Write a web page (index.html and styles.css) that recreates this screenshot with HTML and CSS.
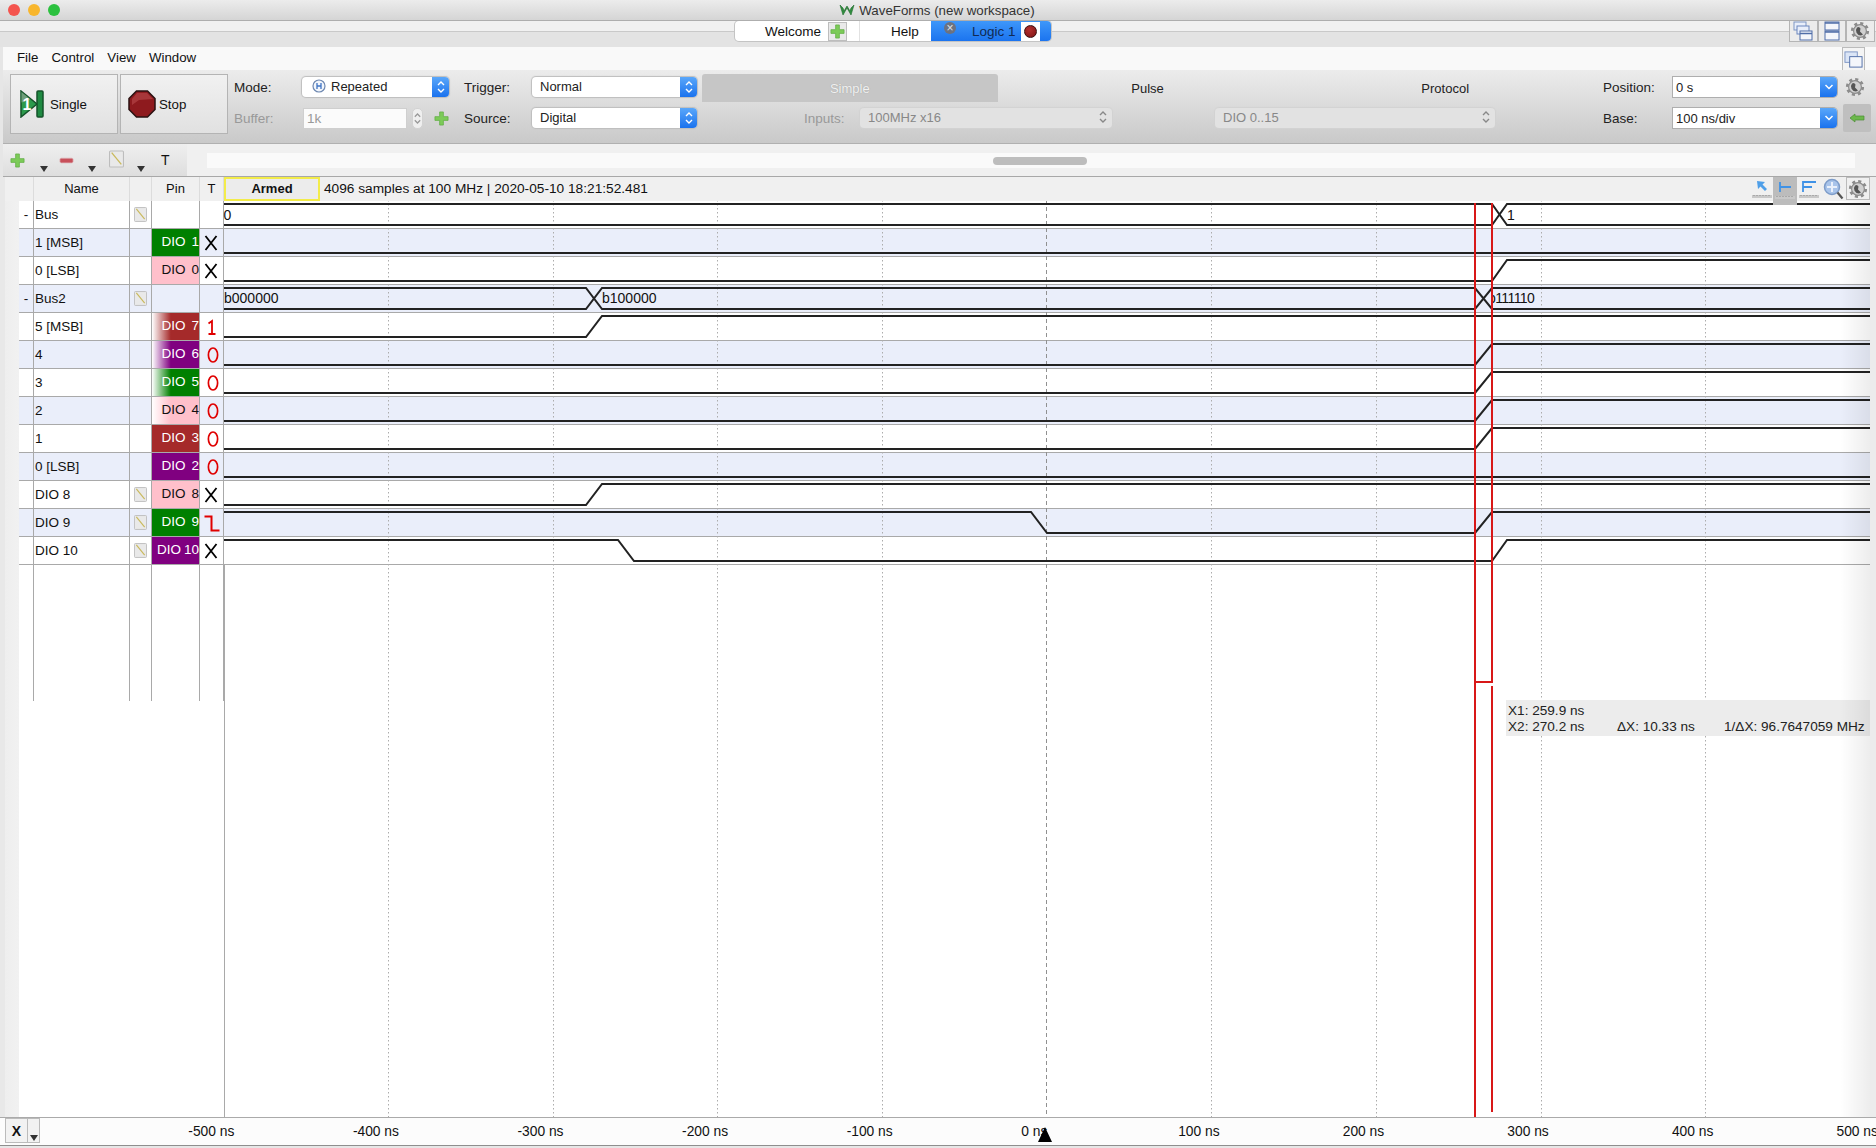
FILE: index.html
```html
<!DOCTYPE html>
<html lang="en">
<head>
  <meta charset="UTF-8" />
  <title>WaveForms (new workspace)</title>
  <link rel="stylesheet" href="styles.css">
</head>
<body>
  <svg class="defs" width="0" height="0">
    <symbol id="i-plus" viewBox="0 0 16 16"><path d="M6 1h4v5h5v4h-5v5H6v-5H1V6h5z" fill="#7ccb58" stroke="#62ad45" stroke-width=".8"/></symbol>
    <symbol id="i-minus" viewBox="0 0 16 8"><rect x="1" y="1" width="14" height="5" rx="1.5" fill="#c8505a" stroke="#dcb0b4" stroke-width=".8"/></symbol>
    <symbol id="i-note" viewBox="0 0 14 16"><rect x=".5" y=".5" width="13" height="15" rx="1" fill="#e9e9e9" stroke="#bdbdbd"/><path d="M2.500 2l9 11" stroke="#c9b95c" stroke-width="1.200"/></symbol>
    <symbol id="i-gear" viewBox="0 0 20 20"><circle cx="10" cy="10" r="7.6" fill="none" stroke="#8c8c8c" stroke-width="3" stroke-dasharray="3 2.96"/><circle cx="10" cy="10" r="6.4" fill="#d0d0d0" stroke="#8c8c8c" stroke-width="1.2"/><path d="M7 6.5a5 5 0 0 0 4 8l2-1-3-3 .5-3-1.5-1.5z" fill="#555"/></symbol>
    <symbol id="i-stack" viewBox="0 0 20 20"><rect x="1" y="1" width="12" height="8" fill="#e8eefa" stroke="#7d95c4"/><rect x="4" y="5" width="12" height="8" fill="#e8eefa" stroke="#6b86bd"/><rect x="7" y="10" width="12" height="9" fill="#f4f6fb" stroke="#4f6da8"/><path d="M7 12.500h12" stroke="#4f6da8" stroke-width="1.500"/></symbol>
    <symbol id="i-split" viewBox="0 0 20 20"><rect x="3" y="1" width="14" height="8" fill="#f4f6fb" stroke="#4f6da8"/><rect x="3" y="10" width="14" height="9" fill="#f4f6fb" stroke="#4f6da8"/><path d="M3 2h14M3 11h14" stroke="#4f6da8" stroke-width="1.500"/></symbol>
    <symbol id="i-pair" viewBox="0 0 20 20"><rect x="1" y="2" width="13" height="11" fill="#dbe5f6" stroke="#7d95c4"/><rect x="6" y="7" width="13" height="11" fill="#f4f6fb" stroke="#4f6da8"/></symbol>
    <symbol id="i-x" viewBox="0 0 24 28"><path d="M5.500 7l11 14M16.500 7l-11 14" stroke="#000" stroke-width="1.800" fill="none"/></symbol>
    <symbol id="i-zero" viewBox="0 0 24 28"><ellipse cx="13" cy="14" rx="4.600" ry="7" stroke="#e00000" stroke-width="1.700" fill="none"/></symbol>
    <symbol id="i-one" viewBox="0 0 24 28"><path d="M8.500 10.500l3.500-2.500V21M8.500 21h7" stroke="#e00000" stroke-width="1.800" fill="none"/></symbol>
    <symbol id="i-fall" viewBox="0 0 24 28"><path d="M4.500 7.500H11.500V21.500H19.500" stroke="#e00000" stroke-width="2" fill="none"/></symbol>
    <symbol id="i-down" viewBox="0 0 8 6"><path d="M0 0h8L4 6z" fill="#333"/></symbol>
    <symbol id="i-updown" viewBox="0 0 10 16"><path d="M2 6l3-3 3 3M2 10l3 3 3-3" fill="none" stroke="currentColor" stroke-width="1.400"/></symbol>
    <symbol id="i-chev" viewBox="0 0 10 8"><path d="M1.500 2l3.500 3.500L8.500 2" fill="none" stroke="#fff" stroke-width="1.500"/></symbol>
    <symbol id="i-ruler" viewBox="0 0 22 5"><path d="M1 1h20v3H1z" fill="#c8c8c8"/><path d="M3 1v1M6 1v1M9 1v1M12 1v1M15 1v1M18 1v1" stroke="#8a8a8a"/></symbol>
    <clipPath id="past-cursor"><rect x="1493" y="284" width="100" height="28"/></clipPath>
  </svg>

  <header class="titlebar">
    <div class="lights"><i class="red"></i><i class="amber"></i><i class="green"></i></div>
    <svg class="logo" viewBox="0 0 16 12" width="16" height="12"><path d="M1 1l3 10 4-7 4 7 3-10-3 3-1 3-3-5-3 5-1-3z" fill="#2f8f3e" stroke="#1f6a2c" stroke-width=".6"/></svg>
    <span>WaveForms (new workspace)</span>
  </header>

  <div class="tabstrip">
    <div class="tabs">
      <div class="tab tab-welcome">
        <span>Welcome</span>
        <b class="tab-box"><svg width="15" height="15"><use href="#i-plus"/></svg></b>
      </div>
      <div class="tab tab-help"><span>Help</span></div>
      <div class="tab tab-logic">
        <i class="tab-close">×</i>
        <span>Logic 1</span>
        <b class="tab-box tab-box-white"><i class="red-dot"></i></b>
      </div>
    </div>
    <div class="win-btns">
      <button class="win-btn"><svg width="20" height="20"><use href="#i-stack"/></svg></button>
      <button class="win-btn"><svg width="20" height="20"><use href="#i-split"/></svg></button>
      <button class="win-btn"><svg width="20" height="20"><use href="#i-gear"/></svg></button>
    </div>
  </div>

  <nav class="menubar">
    <span>File</span><span>Control</span><span>View</span><span>Window</span>
    <button class="menu-btn"><svg width="19" height="19"><use href="#i-pair"/></svg></button>
  </nav>

  <section class="toolbar">
    <button class="run-btn">
      <svg class="run-icon" viewBox="0 0 24 28" width="24" height="28">
        <path d="M1 1l16 13L1 27z" fill="#2c9a4c" stroke="#14532a" stroke-width="1.500"/>
        <path d="M1.500 2l9 7.500-9 3z" fill="#6f9e7a"/>
        <rect x="17" y="1" width="6" height="26" rx="1" fill="#1f8a42" stroke="#14532a" stroke-width="1.500"/>
        <text x="2.500" y="20" class="run-one">1</text>
      </svg>
      <span>Single</span>
    </button>
    <button class="run-btn run-stop">
      <svg class="run-icon" viewBox="0 0 28 28" width="28" height="28">
        <path d="M8.500 1h11L27 8.500v11L19.500 27h-11L1 19.500v-11z" fill="#8e1a1e" stroke="#2a1212" stroke-width="1.500"/>
        <path d="M9 3h10l6 6-14 1-7 5V9z" fill="#a8373a"/>
      </svg>
      <span>Stop</span>
    </button>

    <div class="fields fields-mode">
      <label>Mode:</label>
      <div class="select">
        <svg class="mode-icon" viewBox="0 0 14 14" width="14" height="14"><circle cx="7" cy="7" r="6" fill="#f2f6fc" stroke="#6d87b0" stroke-width="1.200"/><path d="M5 4v6M9 4v6M5 7h4" stroke="#3f74c4" stroke-width="1.300"/></svg>
        <span>Repeated</span>
        <b class="step"><svg width="10" height="16" class="white"><use href="#i-updown"/></svg></b>
      </div>
      <label class="dim">Buffer:</label>
      <div class="buffer">
        <div class="input-dim">1k</div>
        <svg class="spin" width="11" height="21" viewBox="0 0 10 16"><use href="#i-updown"/></svg>
        <svg class="buffer-plus" width="15" height="15"><use href="#i-plus"/></svg>
      </div>
    </div>

    <div class="fields fields-trigger">
      <label>Trigger:</label>
      <div class="select"><span>Normal</span><b class="step"><svg width="10" height="16" class="white"><use href="#i-updown"/></svg></b></div>
      <label>Source:</label>
      <div class="select"><span>Digital</span><b class="step"><svg width="10" height="16" class="white"><use href="#i-updown"/></svg></b></div>
    </div>

    <div class="trigger-panel">
      <div class="trigger-tabs">
        <div class="ttab ttab-on">Simple</div>
        <div class="ttab">Pulse</div>
        <div class="ttab">Protocol</div>
      </div>
      <div class="trigger-row">
        <label class="dim">Inputs:</label>
        <div class="select select-off select-inputs"><span>100MHz x16</span><svg width="10" height="16"><use href="#i-updown"/></svg></div>
        <div class="select select-off select-dio"><span>DIO 0..15</span><svg width="10" height="16"><use href="#i-updown"/></svg></div>
      </div>
    </div>

    <div class="fields fields-time">
      <label>Position:</label>
      <div class="select select-box"><span>0 s</span><b class="step"><svg width="10" height="8"><use href="#i-chev"/></svg></b></div>
      <svg class="time-gear" width="20" height="20"><use href="#i-gear"/></svg>
      <label>Base:</label>
      <div class="select select-box"><span>100 ns/div</span><b class="step"><svg width="10" height="8"><use href="#i-chev"/></svg></b></div>
      <button class="back-btn"><svg viewBox="0 0 16 10" width="16" height="10"><path d="M1 5l5-4v2h9v4H6v2z" fill="#6cb84c" stroke="#4a8d33" stroke-width=".7"/></svg></button>
    </div>
  </section>

  <div class="toolstrip">
    <div class="tool-tab">
      <svg class="t-plus" width="15" height="15"><use href="#i-plus"/></svg>
      <svg class="t-arrow" width="8" height="6"><use href="#i-down"/></svg>
      <svg class="t-minus" width="15" height="8"><use href="#i-minus"/></svg>
      <svg class="t-arrow" width="8" height="6"><use href="#i-down"/></svg>
      <svg class="t-note" width="15" height="18"><use href="#i-note"/></svg>
      <svg class="t-arrow" width="8" height="6"><use href="#i-down"/></svg>
      <span class="t-text">T</span>
    </div>
    <div class="track"><div class="thumb"></div></div>
  </div>

  <main class="signals">
    <div class="head">
      <div class="hcell hcell-blank"></div>
      <div class="hcell">Name</div>
      <div class="hcell"></div>
      <div class="hcell">Pin</div>
      <div class="hcell">T</div>
      <div class="head-status">
        <div class="armed">Armed</div>
        <span class="status">4096 samples at 100 MHz | 2020-05-10 18:21:52.481</span>
        <div class="view-btns">
          <svg class="view-icon" viewBox="0 0 22 26" width="22" height="26"><path d="M6 4l8 1-2.500 2.500L16 12l-2 2-4.500-4.500L7 12z" fill="#4f9fe8"/><use href="#i-ruler" y="17" width="22" height="5"/></svg>
          <svg class="view-icon view-on" viewBox="0 0 22 28" width="24" height="28"><path d="M6 5v10M6 10h11" stroke="#3f92e6" stroke-width="1.800"/><use href="#i-ruler" y="18" width="22" height="5"/></svg>
          <svg class="view-icon" viewBox="0 0 22 26" width="24" height="26"><path d="M5 4v11M5 5h13M5 10h9" stroke="#3f92e6" stroke-width="1.800"/><use href="#i-ruler" y="17" width="22" height="5"/></svg>
          <svg class="view-icon" viewBox="0 0 22 24" width="24" height="24"><circle cx="10" cy="10" r="7.500" fill="#a9c4ea" stroke="#7d9cc9" stroke-width="1.500"/><path d="M10 5v10M5 10h10" stroke="#e9f0fb" stroke-width="2"/><path d="M15.500 15.500l5 6" stroke="#555" stroke-width="2.200"/></svg>
          <span class="gear-box"><svg width="20" height="20"><use href="#i-gear"/></svg></span>
        </div>
      </div>
    </div>

    <div class="row">
      <div class="cell cell-fold">-</div><div class="cell cell-name">Bus</div>
      <div class="cell cell-note"><svg width="13" height="15"><use href="#i-note"/></svg></div>
      <div class="cell"></div><div class="cell"></div><div class="cell-plot"></div>
    </div>
    <div class="row alt">
      <div class="cell"></div><div class="cell cell-name">1 [MSB]</div><div class="cell"></div>
      <div class="pin green">DIO  1</div>
      <div class="cell cell-t"><svg width="24" height="28"><use href="#i-x"/></svg></div><div class="cell-plot"></div>
    </div>
    <div class="row">
      <div class="cell"></div><div class="cell cell-name">0 [LSB]</div><div class="cell"></div>
      <div class="pin pink">DIO  0</div>
      <div class="cell cell-t"><svg width="24" height="28"><use href="#i-x"/></svg></div><div class="cell-plot"></div>
    </div>
    <div class="row alt">
      <div class="cell cell-fold">-</div><div class="cell cell-name">Bus2</div>
      <div class="cell cell-note"><svg width="13" height="15"><use href="#i-note"/></svg></div>
      <div class="cell"></div><div class="cell"></div><div class="cell-plot"></div>
    </div>
    <div class="row">
      <div class="cell"></div><div class="cell cell-name">5 [MSB]</div><div class="cell"></div>
      <div class="pin fade-brown">DIO  7</div>
      <div class="cell cell-t"><svg width="24" height="28"><use href="#i-one"/></svg></div><div class="cell-plot"></div>
    </div>
    <div class="row alt">
      <div class="cell"></div><div class="cell cell-name">4</div><div class="cell"></div>
      <div class="pin fade-purple">DIO  6</div>
      <div class="cell cell-t"><svg width="24" height="28"><use href="#i-zero"/></svg></div><div class="cell-plot"></div>
    </div>
    <div class="row">
      <div class="cell"></div><div class="cell cell-name">3</div><div class="cell"></div>
      <div class="pin fade-green">DIO  5</div>
      <div class="cell cell-t"><svg width="24" height="28"><use href="#i-zero"/></svg></div><div class="cell-plot"></div>
    </div>
    <div class="row alt">
      <div class="cell"></div><div class="cell cell-name">2</div><div class="cell"></div>
      <div class="pin fade-pink">DIO  4</div>
      <div class="cell cell-t"><svg width="24" height="28"><use href="#i-zero"/></svg></div><div class="cell-plot"></div>
    </div>
    <div class="row">
      <div class="cell"></div><div class="cell cell-name">1</div><div class="cell"></div>
      <div class="pin brown">DIO  3</div>
      <div class="cell cell-t"><svg width="24" height="28"><use href="#i-zero"/></svg></div><div class="cell-plot"></div>
    </div>
    <div class="row alt">
      <div class="cell"></div><div class="cell cell-name">0 [LSB]</div><div class="cell"></div>
      <div class="pin purple">DIO  2</div>
      <div class="cell cell-t"><svg width="24" height="28"><use href="#i-zero"/></svg></div><div class="cell-plot"></div>
    </div>
    <div class="row">
      <div class="cell"></div><div class="cell cell-name">DIO 8</div>
      <div class="cell cell-note"><svg width="13" height="15"><use href="#i-note"/></svg></div>
      <div class="pin pink">DIO  8</div>
      <div class="cell cell-t"><svg width="24" height="28"><use href="#i-x"/></svg></div><div class="cell-plot"></div>
    </div>
    <div class="row alt">
      <div class="cell"></div><div class="cell cell-name">DIO 9</div>
      <div class="cell cell-note"><svg width="13" height="15"><use href="#i-note"/></svg></div>
      <div class="pin green">DIO  9</div>
      <div class="cell cell-t"><svg width="24" height="28"><use href="#i-fall"/></svg></div><div class="cell-plot"></div>
    </div>
    <div class="row">
      <div class="cell"></div><div class="cell cell-name">DIO 10</div>
      <div class="cell cell-note"><svg width="13" height="15"><use href="#i-note"/></svg></div>
      <div class="pin purple">DIO 10</div>
      <div class="cell cell-t"><svg width="24" height="28"><use href="#i-x"/></svg></div><div class="cell-plot"></div>
    </div>
    <div class="row row-empty">
      <div class="cell"></div><div class="cell"></div><div class="cell"></div><div class="cell"></div><div class="cell"></div><div class="cell-plot"></div>
    </div>

    <!-- grid, traces and cursors share page coordinates -->
    <svg class="scope" viewBox="0 177 1876 941" width="1876" height="941">
      <path class="sep" d="M224.500 564V1117"/>
      <path class="grid" d="M388.500 200V1117M553.500 200V1117M717.500 200V1117M882.500 200V1117M1211.500 200V1117M1376.500 200V1117M1541.500 200V1117M1705.500 200V1117"/>
      <path class="grid grid-zero" d="M1046.500 200V1117"/>

      <path class="trace" d="M224 204H1492L1507 225H1870M224 225H1492L1507 204H1870"/>
      <path class="trace" d="M224 253H1870"/>
      <path class="trace" d="M224 281H1492L1507 260H1870"/>
      <path class="trace" d="M224 288H586L602 309H1475L1492 288H1870M224 309H586L602 288H1475L1492 309H1870"/>
      <path class="trace" d="M224 337H586L602 316H1870"/>
      <path class="trace" d="M224 365H1475L1492 344H1870"/>
      <path class="trace" d="M224 393H1475L1492 372H1870"/>
      <path class="trace" d="M224 421H1475L1492 400H1870"/>
      <path class="trace" d="M224 449H1475L1492 428H1870"/>
      <path class="trace" d="M224 477H1870"/>
      <path class="trace" d="M224 505H586L602 484H1870"/>
      <path class="trace" d="M224 512H1031L1047 533H1475L1492 512H1870"/>
      <path class="trace" d="M224 540H618L634 561H1492L1507 540H1870"/>

      <text class="bus-val" x="223.500" y="220">0</text>
      <text class="bus-val" x="1507" y="220">1</text>
      <text class="bus-val" x="224" y="303">b000000</text>
      <text class="bus-val" x="602" y="303">b100000</text>
      <text class="bus-val bus-tight" x="1488" y="303" clip-path="url(#past-cursor)">b111110</text>

      <path class="cursor" d="M1475 203V1117M1492 203V682H1475M1492 686V1112"/>
    </svg>

    <div class="readout">
      <div>X1: 259.9 ns</div>
      <div class="readout-row"><span class="rd-a">X2: 270.2 ns</span><span class="rd-b">ΔX: 10.33 ns</span><span>1/ΔX: 96.7647059 MHz</span></div>
    </div>
    <div class="edge-fade"></div>
  </main>

  <footer class="axis">
    <button class="axis-x">X</button>
    <button class="axis-drop"><svg width="8" height="6"><use href="#i-down"/></svg></button>
    <div class="ticks">
      <span>-500 ns</span><span>-400 ns</span><span>-300 ns</span><span>-200 ns</span><span>-100 ns</span><span>0 ns</span><span>100 ns</span><span>200 ns</span><span>300 ns</span><span>400 ns</span><span>500 ns</span>
    </div>
    <svg class="zero-mark" width="14" height="15"><path d="M7 0l7 15H0z" fill="#000"/></svg>
  </footer>
</body>
</html>
```

FILE: styles.css
```css
* {
  margin: 0;
  padding: 0;
  box-sizing: border-box;
}

body {
  width: 1876px;
  height: 1148px;
  overflow: hidden;
  background: #e6e6e6;
  color: #111;
  font-family: "Liberation Sans", Arial, sans-serif;
  font-size: 13.5px;
  display: flex;
  flex-direction: column;
}

button {
  font: inherit;
  color: inherit;
  cursor: default;
}

svg {
  display: block;
  flex: none;
}

.defs {
  position: absolute;
}

label {
  font-size: 13.5px;
  color: #222;
}

.dim {
  color: #999;
}

/* title bar */
.titlebar {
  height: 21px;
  flex: none;
  display: flex;
  align-items: center;
  justify-content: center;
  gap: 4px;
  background: linear-gradient(#ececec, #d5d5d5);
  border-bottom: 1px solid #aeaeae;
  position: relative;
  padding-right: 2px;
  font-size: 13.3px;
  color: #333;
}

.lights {
  position: absolute;
  left: 8px;
  top: 4px;
  display: flex;
  gap: 8px;
}

.lights i {
  width: 12px;
  height: 12px;
  border-radius: 50%;
}

.lights .red { background: #f4544e; }
.lights .amber { background: #f8b62d; }
.lights .green { background: #2cc13f; }

/* tabs */
.tabstrip {
  height: 26px;
  flex: none;
  display: flex;
  padding-left: 735px;
  background: linear-gradient(#f1f1f1 10px, #c9c9c9 10px, #c9c9c9 11px, #e3e3e3 11px);
}

.tabs {
  display: flex;
  width: 316px;
  height: 20px;
  background: #fff;
  border-radius: 4px;
  box-shadow: 0 0 0 1px #c4c4c4;
  overflow: hidden;
}

.tab {
  display: flex;
  align-items: center;
  height: 20px;
  position: relative;
}

.tab-welcome {
  width: 125px;
  padding-left: 30px;
  border-right: 1px solid #e2e2e2;
}

.tab-help {
  width: 71px;
  padding-left: 31px;
}

.tab-logic {
  width: 120px;
  padding-left: 41px;
  background: linear-gradient(#3e97f9, #1b74ef);
  color: #102a55;
}

.tab-box {
  position: absolute;
  top: 1px;
  width: 19px;
  height: 19px;
  display: flex;
  align-items: center;
  justify-content: center;
  background: #e9e9e9;
  border: 1px solid #bdbdbd;
}

.tab-welcome .tab-box {
  right: 12px;
}

.tab-box-white {
  right: 11px;
  background: #fff;
  border: 0;
}

.red-dot {
  width: 13px;
  height: 13px;
  border-radius: 50%;
  background: radial-gradient(circle at 40% 35%, #b5302f, #7d1414);
  border: 1px solid #3a1010;
}

.tab-close {
  position: absolute;
  left: 13px;
  top: 1px;
  width: 12px;
  height: 12px;
  border-radius: 50%;
  background: #6c7280;
  color: #dfe3ea;
  font-style: normal;
  font-size: 12px;
  line-height: 12px;
  text-align: center;
}

.win-btns {
  display: flex;
  margin-left: 738px;
  height: 21px;
}

.win-btn {
  width: 28.500px;
  height: 21px;
  display: flex;
  align-items: center;
  justify-content: center;
  background: #ececec;
  border: 1px solid #b5b5b5;
  border-top: 0;
}

/* menu */
.menubar {
  height: 23px;
  flex: none;
  margin-left: 3px;
  padding: 0 0 2px 14px;
  display: flex;
  align-items: center;
  gap: 13px;
  background: #f9f9f9;
  font-size: 13.3px;
  position: relative;
}

.menu-btn {
  position: absolute;
  right: 11px;
  top: 0;
  width: 23px;
  height: 23px;
  display: flex;
  align-items: center;
  justify-content: center;
  background: #f4f4f4;
  border: 1px solid #bbb;
  border-bottom: 0;
}

/* toolbar */
.toolbar {
  height: 74px;
  flex: none;
  margin-left: 3px;
  padding: 4px 0 0 7px;
  display: flex;
  align-items: flex-start;
  background: linear-gradient(#ececec, #c9c9c9);
  border-bottom: 1px solid #b0b0b0;
}

.run-btn {
  width: 108px;
  height: 60px;
  margin-right: 2px;
  display: flex;
  align-items: center;
  gap: 6px;
  padding-left: 9px;
  background: linear-gradient(#f1f1f1, #e1e1e1);
  border: 1px solid #b4b4b4;
  font-size: 13.3px;
}

.run-stop {
  padding-left: 7px;
  gap: 3px;
}

.run-one {
  fill: #fff;
  font-size: 16px;
  font-weight: bold;
}

.fields {
  display: grid;
  grid-template-rows: 20px 20px;
  row-gap: 11px;
  align-items: center;
  padding-top: 3px;
}

.fields-mode {
  margin-left: 4px;
  grid-template-columns: 68px 147px;
}

.fields-trigger {
  margin-left: 15px;
  grid-template-columns: 68px 165px;
}

.fields-time {
  margin-left: 10px;
  grid-template-columns: 70px 164px 34px;
}

.select {
  height: 20px;
  display: flex;
  align-items: center;
  padding: 0 0 2px 8px;
  background: #fff;
  border-radius: 4px;
  box-shadow: 0 0 1px 1px #bdbdbd;
  font-size: 13px;
  position: relative;
  color: #222;
}

.step {
  position: absolute;
  right: 0;
  top: 0;
  width: 17px;
  height: 20px;
  display: flex;
  align-items: center;
  justify-content: center;
  background: linear-gradient(#5aa7fa, #1a72ee);
  border-radius: 0 4px 4px 0;
}

.white {
  color: #fff;
}

.mode-icon {
  margin: 0 5px 0 2px;
}

.buffer {
  display: flex;
  align-items: center;
  padding-left: 1px;
}

.input-dim {
  width: 107px;
  height: 21px;
  padding-left: 3px;
  background: #fbfbfb;
  border: 1px solid #cfcfcf;
  color: #999;
  line-height: 19px;
}

.spin {
  margin-left: 5px;
  color: #999;
  background: #efefef;
  border: 1px solid #d2d2d2;
  border-radius: 5px;
}

.buffer-plus {
  margin-left: 11px;
}

.trigger-panel {
  width: 891px;
  margin-left: 5px;
}

.trigger-tabs {
  display: flex;
  height: 28px;
}

.ttab {
  flex: 1;
  display: flex;
  align-items: center;
  justify-content: center;
  padding-left: 2px;
  font-size: 13px;
  color: #222;
}

.ttab-on {
  padding-left: 0;
  background: #c6c6c6;
  border-radius: 3px 3px 0 0;
  color: #f2f2f2;
  text-shadow: 0 0 1px #999;
}

.trigger-row {
  display: flex;
  align-items: center;
  height: 20px;
  margin-top: 6px;
  padding-left: 102px;
}

.trigger-row label {
  width: 56px;
}

.select-off {
  justify-content: space-between;
  padding-right: 4px;
  background: #e2e2e2;
  box-shadow: 0 0 1px 1px #d2d2d2;
  color: #888;
}

.select-inputs {
  width: 252px;
}

.select-dio {
  width: 280px;
  margin-left: 103px;
}

.select-box {
  padding: 0 0 0 3px;
  border-radius: 0 4px 4px 0;
  box-shadow: 0 0 0 1px #aeaeae;
}

.time-gear {
  margin-left: 8px;
}

.back-btn {
  width: 28px;
  height: 28px;
  margin-left: 6px;
  display: flex;
  align-items: center;
  justify-content: center;
  background: #bfbfbf;
  border: 0;
  border-radius: 2px;
}

/* list tools */
.toolstrip {
  height: 33px;
  flex: none;
  margin-left: 3px;
  display: flex;
  background: #f0f0f0;
  border-bottom: 1px solid #a8a8a8;
}

.tool-tab {
  width: 184px;
  display: flex;
  align-items: flex-start;
  padding-left: 7px;
  background: linear-gradient(#efefef, #dedede);
}

.t-plus { margin-top: 9px; }
.t-arrow { margin: 22px 0 0 13px; }
.t-plus + .t-arrow { margin-left: 15px; }
.t-minus { margin: 13px 0 0 11px; }
.t-minus + .t-arrow { margin-left: 14px; }
.t-note { margin: 6px 0 0 13px; }

.t-text {
  margin: 8px 0 0 16px;
  font-size: 14px;
}

.track {
  margin: 9px 20px 0 20px;
  width: 1648px;
  height: 15px;
  padding: 4px 0 0 786px;
  background: #fafafa;
}

.thumb {
  width: 94px;
  height: 8px;
  border-radius: 4px;
  background: #bdbdbd;
}

/* signal table */
.signals {
  position: relative;
  height: 940px;
  flex: none;
  background: linear-gradient(to right, #e8e8e8 5px, #eeeeee 5px, #f1f1f1 19px, #fff 19px, #fff 1870px, #ececec 1870px);
  overflow: hidden;
}

.head,
.row {
  display: grid;
  margin-right: 6px;
}

.head {
  height: 24px;
  background: #f0f0f0;
  position: relative;
  z-index: 3;
  border-left: 5px solid #e8e8e8;
  grid-template-columns: 29px 96px 22px 48px 24px 1fr;
}

.hcell {
  display: flex;
  align-items: center;
  justify-content: center;
  padding-bottom: 1px;
  border-right: 1px solid #dcdcdc;
  font-size: 13px;
}

.head-status {
  display: flex;
  align-items: center;
  font-size: 13.7px;
  min-width: 0;
}

.armed {
  width: 96px;
  height: 24px;
  line-height: 19px;
  text-align: center;
  font-weight: bold;
  font-size: 13px;
  background: #ececec;
  border: 2px solid #f3ec4a;
}

.status {
  margin: 0 0 1px 4px;
}

.view-btns {
  margin-left: auto;
  display: flex;
  align-items: flex-start;
  height: 24px;
}

.view-on {
  background: #bcbcbc;
}

.gear-box {
  width: 24px;
  height: 23px;
  display: flex;
  align-items: center;
  justify-content: center;
  border: 1px solid #bbb;
  margin-left: 1px;
}

.row {
  height: 28px;
  margin-left: 19px;
  grid-template-columns: 15px 96px 22px 48px 24px 1fr;
  background: #fff;
  border-bottom: 1px solid #a9a9a9;
}

.row.alt {
  background: #eaeefa;
}

.row-empty {
  height: 136px;
  border-bottom: 0;
  background: none;
}

.cell {
  border-right: 1px solid #a9a9a9;
  display: flex;
  align-items: center;
  white-space: pre;
}

.cell:first-child {
  justify-content: center;
}

.cell-name {
  padding: 0 0 1px 1px;
}

.cell-note {
  align-items: flex-start;
  padding: 6px 0 0 4px;
}

.cell-t {
  align-items: flex-start;
}

.pin {
  height: 27px;
  line-height: 26px;
  text-align: right;
  white-space: pre;
  word-spacing: -0.8px;
  border-right: 1px solid #a9a9a9;
}

.green { background: #008000; color: #fff; }
.pink { background: #ffc0cb; color: #111; }
.brown { background: #a52a2a; color: #fff; }
.purple { background: #800080; color: #fff; }
.fade-brown { background: linear-gradient(to right, #fff, #a52a2a 40%); color: #fff; }
.fade-purple { background: linear-gradient(to right, #fff, #800080 40%); color: #fff; }
.fade-green { background: linear-gradient(to right, #fff, #008000 40%); color: #fff; }
.fade-pink { background: linear-gradient(to right, #fff, #ffc0cb 40%); color: #111; }

/* scope overlay */
.scope {
  position: absolute;
  left: 0;
  top: 0;
}

.sep {
  stroke: #a9a9a9;
  stroke-width: 1;
}

.grid {
  stroke: #acacac;
  stroke-width: 1;
  stroke-dasharray: 1.5 2.5;
  fill: none;
}

.grid-zero {
  stroke: #909090;
  stroke-dasharray: 4 3;
}

.trace {
  fill: none;
  stroke: #222;
  stroke-width: 2;
}

.cursor {
  fill: none;
  stroke: #d81818;
  stroke-width: 2;
}

.bus-val {
  font-size: 14px;
  fill: #111;
}

.bus-tight {
  letter-spacing: -0.6px;
}

.readout {
  position: absolute;
  left: 1506px;
  top: 523px;
  width: 364px;
  height: 36px;
  padding: 3px 0 0 2px;
  background: #ececec;
  font-size: 13.6px;
  line-height: 16px;
  color: #222;
}

.readout-row {
  display: flex;
}

.rd-a { width: 109px; }
.rd-b { width: 107px; }

.edge-fade {
  position: absolute;
  left: 1840px;
  top: 23px;
  width: 30px;
  bottom: 0;
  background: linear-gradient(to right, rgba(0, 0, 0, 0), rgba(0, 0, 0, 0.07));
  pointer-events: none;
}

/* time axis */
.axis {
  height: 29px;
  flex: none;
  padding-left: 5px;
  display: flex;
  position: relative;
  background: #fcfcfc;
  border-top: 1px solid #aaa;
  border-bottom: 1px solid #8e8e8e;
  overflow: hidden;
}

.axis-x {
  width: 23px;
  height: 25px;
  flex: none;
  background: #f2f2f2;
  border: 1px solid #bbb;
  font-weight: bold;
  font-size: 14px;
}

.axis-drop {
  width: 12px;
  height: 25px;
  flex: none;
  padding: 14px 0 0 2px;
  background: #f2f2f2;
  border: 1px solid #bbb;
  border-left: 0;
}

.ticks {
  display: flex;
  margin-left: 89px;
}

.ticks span {
  width: 164.600px;
  flex: none;
  text-align: center;
  line-height: 27px;
  font-size: 13.8px;
}

.zero-mark {
  position: absolute;
  left: 1038px;
  top: 9px;
}
```
